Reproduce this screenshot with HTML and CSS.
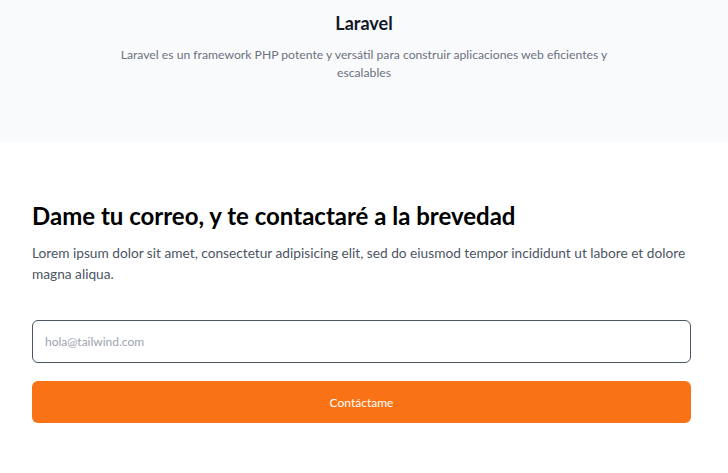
FILE: index.html
```html
<!DOCTYPE html>
<html lang="es">
<head>
<meta charset="utf-8">
<link rel="stylesheet" href="styles.css">
</head>
<body>
<section class="hero">
  <h2 class="hero-title">Laravel</h2>
  <p class="hero-text">Laravel es un framework PHP potente y versátil para construir aplicaciones web eficientes y escalables</p>
</section>
<section class="contact">
  <h1 class="contact-title">Dame tu correo, y te contactaré a la brevedad</h1>
  <p class="contact-text">Lorem ipsum dolor sit amet, consectetur adipisicing elit, sed do eiusmod tempor incididunt ut labore et dolore magna aliqua.</p>
  <form class="contact-form">
    <input class="email" type="email" placeholder="hola@tailwind.com">
    <button class="submit" type="button">Contáctame</button>
  </form>
</section>
</body>
</html>
```
FILE: styles.css
```css
* { box-sizing: border-box; }
html, body { margin: 0; padding: 0; background: #fff; }
body { font-family: "Lato", "Open Sans", sans-serif; color: #111; }

.hero {
  background: #f9fafb;
  height: 142px;
  padding-top: 11px;
  display: flex;
  flex-direction: column;
  align-items: center;
}
.hero-title {
  margin: 0;
  font-size: 18px;
  font-weight: 700;
  line-height: 24px;
  color: #111827;
}
.hero-text {
  margin: 11px 0 0;
  width: 500px;
  text-align: center;
  font-size: 12.2px;
  line-height: 18px;
  color: #6b7280;
}

.contact {
  padding: 59px 37px 0 32px;
}
.contact-title {
  margin: 0;
  font-size: 24px;
  font-weight: 700;
  line-height: 30px;
  color: #000;
}
.contact-text {
  margin: 11px 0 0;
  font-size: 13.7px;
  line-height: 21px;
  color: #4b5563;
}
.contact-form {
  margin-top: 36px;
  display: flex;
  flex-direction: column;
  gap: 18px;
}
.email {
  height: 43px;
  border: 1px solid #4b5563;
  border-radius: 6px;
  padding: 0 12px;
  font-family: inherit;
  font-size: 12px;
  color: #111;
  background: #fff;
  outline: none;
}
.email::placeholder { color: #9ca3af; }
.submit {
  height: 42px;
  border: 0;
  border-radius: 6px;
  background: #f97316;
  color: #fff;
  font-family: inherit;
  font-size: 12px;
  cursor: pointer;
}
```
